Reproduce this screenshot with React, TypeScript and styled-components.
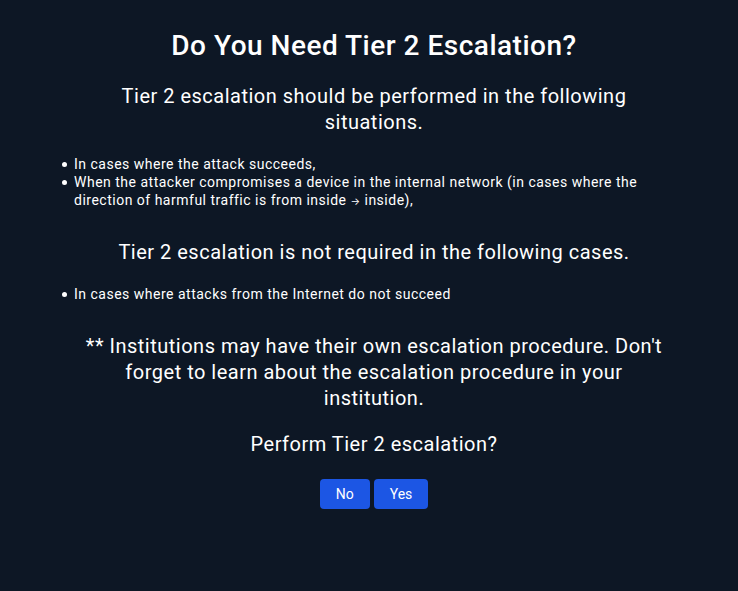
import React from "react";
import styled, { createGlobalStyle } from "styled-components";

const GlobalStyle = createGlobalStyle`
  *, *::before, *::after { box-sizing: border-box; }
  body {
    margin: 0;
    background: #0d1725;
    color: #fff;
    font-family: Roboto, sans-serif;
    letter-spacing: 0.5px;
  }
`;

const Page = styled.main`
  min-height: 100vh;
  padding: 24px 52px 24px 62px;
  display: flex;
  flex-direction: column;
`;

const Title = styled.h1`
  margin: 0;
  padding-bottom: 16px;
  font-size: 28px;
  line-height: 43px;
  font-weight: 500;
  text-align: center;
`;

const Statement = styled.p`
  margin: 0;
  padding: 0 20px;
  font-size: 20px;
  line-height: 26px;
  text-align: center;
`;

const Conditions = styled.ul`
  margin: 0;
  padding: 20px 0 30px 12px;
  list-style: none;
  font-size: 14px;
  line-height: 18px;
`;

const Condition = styled.li`
  position: relative;
  &::before {
    content: "";
    position: absolute;
    left: -12px;
    top: 7px;
    width: 5px;
    height: 5px;
    border-radius: 50%;
    background: #fff;
  }
`;

const Arrow = styled.span`
  font-family: Inter, sans-serif;
  font-size: 10px;
  line-height: 1;
`;

const Question = styled(Statement)`
  padding-top: 20px;
`;

const Actions = styled.div`
  display: flex;
  justify-content: center;
  gap: 4px;
  padding-top: 22px;
`;

const ActionButton = styled.button`
  height: 30px;
  padding: 0 16px;
  border: 0;
  border-radius: 4px;
  background: #1c56e4;
  color: #fff;
  font: 400 14px/20px Roboto, sans-serif;
  cursor: pointer;
`;

export default function App() {
  return (
    <>
      <GlobalStyle />
      <Page>
        <Title>Do You Need Tier 2 Escalation?</Title>
        <Statement>Tier 2 escalation should be performed in the following situations.</Statement>
        <Conditions>
          <Condition>In cases where the attack succeeds,</Condition>
          <Condition>
            When the attacker compromises a device in the internal network (in cases where the
            direction of harmful traffic is from inside <Arrow>→</Arrow> inside),
          </Condition>
        </Conditions>
        <Statement>Tier 2 escalation is not required in the following cases.</Statement>
        <Conditions>
          <Condition>In cases where attacks from the Internet do not succeed</Condition>
        </Conditions>
        <Statement>
          ** Institutions may have their own escalation procedure. Don't forget to learn about the
          escalation procedure in your institution.
        </Statement>
        <Question>Perform Tier 2 escalation?</Question>
        <Actions>
          <ActionButton type="button">No</ActionButton>
          <ActionButton type="button">Yes</ActionButton>
        </Actions>
      </Page>
    </>
  );
}
